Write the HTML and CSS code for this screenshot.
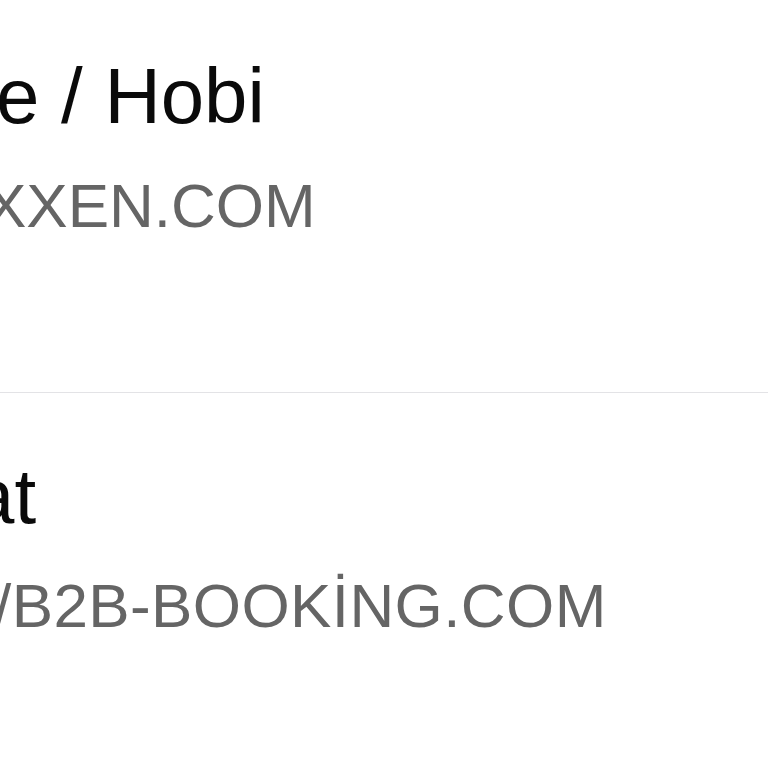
FILE: index.html
```html
<!DOCTYPE html>
<html lang="tr">
<head>
    <meta charset="UTF-8">
    <meta name="viewport" content="width=device-width, initial-scale=1.0">
    <title>Kategoriler</title>
    <link rel="stylesheet" href="styles.css">
</head>
<body>
    <ul class="list">
        <li class="row">
            <div class="title first">e / Hobi</div>
            <div class="sub shift-x">XXEN.COM</div>
        </li>
        <li class="row">
            <div class="title shift-a">at</div>
            <div class="sub shift-slash">/B2B-BOOKİNG.COM</div>
        </li>
    </ul>
</body>
</html>
```

FILE: styles.css
```css
html, body { margin: 0; padding: 0; background: #fff; overflow: hidden; }
body { font-family: "Liberation Sans", Arial, sans-serif; width: 768px; height: 768px; }
.list { list-style: none; margin: -7px 0 0 0; padding: 0; }
.row { box-sizing: border-box; height: 400px; padding-top: 64px; border-bottom: 1px solid #e3e3e6; white-space: nowrap; }
.title { font-size: 78px; line-height: 78px; color: #0a0a0a; }
.sub { font-size: 62px; line-height: 62px; color: #656565; margin-top: 40px; }
.first { margin-left: -4px; }
.shift-x { margin-left: -15px; }
.shift-a { margin-left: -29px; }
.shift-slash { margin-left: -6px; letter-spacing: 0.4px; }
```
